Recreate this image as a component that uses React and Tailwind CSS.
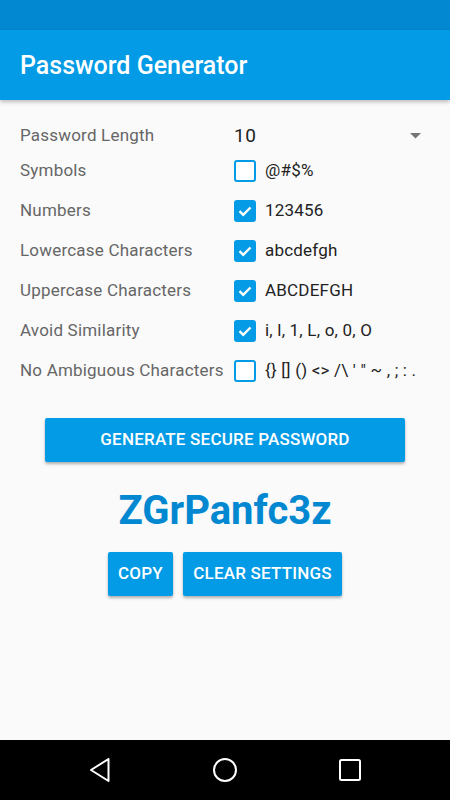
import React, { useState } from 'react';

const rows = [
  { label: 'Symbols', value: '@#$%', checked: false },
  { label: 'Numbers', value: '123456', checked: true },
  { label: 'Lowercase Characters', value: 'abcdefgh', checked: true },
  { label: 'Uppercase Characters', value: 'ABCDEFGH', checked: true },
  { label: 'Avoid Similarity', value: 'i, l, 1, L, o, 0, O', checked: true },
  { label: 'No Ambiguous Characters', value: '{} [] () <> /\\ \' " ~ , ; : .', checked: false },
];

const CheckBox = ({ checked }) =>
  checked ? (
    <div className="w-[22px] h-[22px] rounded-[3px] bg-[#039be5] flex items-center justify-center">
      <svg width="16" height="16" viewBox="0 0 16 16">
        <path d="M2.5 8.2 L6.2 11.8 L13.5 4.5" fill="none" stroke="white" strokeWidth="2.4" />
      </svg>
    </div>
  ) : (
    <div className="w-[22px] h-[22px] rounded-[3px] border-2 border-[#039be5] bg-white" />
  );

const App = () => {
  const [settings, setSettings] = useState(rows);

  const toggle = (i) => {
    setSettings(settings.map((r, j) => (j === i ? { ...r, checked: !r.checked } : r)));
  };

  return (
    <div className="w-[450px] h-[800px] flex flex-col bg-[#fafafa] font-['Roboto',sans-serif]">
      {/* status bar + toolbar */}
      <div className="h-[30px] bg-[#0288d1]" />
      <div className="h-[70px] bg-[#039be5] flex items-center px-5 shadow-[0_2px_4px_rgba(0,0,0,0.25)] z-10">
        <h1 className="text-white text-[25px] font-medium pt-[2px]">Password Generator</h1>
      </div>

      <div className="flex-1 flex flex-col">
        <div className="flex flex-col pt-[21px] px-5">
          <div className="flex items-center h-[30px]">
            <span className="w-[214px] text-[17px] tracking-[0.2px] text-[#666]">Password Length</span>
            <span className="flex-1 text-[19px] tracking-[0.5px] text-[#222]">10</span>
            <svg width="11" height="6" viewBox="0 0 11 6" className="mr-[9px]">
              <path d="M0 0 L11 0 L5.5 5.5 Z" fill="#757575" />
            </svg>
          </div>
          {settings.map((r, i) => (
            <div
              key={r.label}
              onClick={() => toggle(i)}
              className={`flex items-center h-[40px] ${i === 0 ? 'mt-[0px]' : ''}`}
            >
              <span className="w-[214px] text-[17px] tracking-[0.2px] text-[#666] whitespace-nowrap">{r.label}</span>
              <CheckBox checked={r.checked} />
              <span className="ml-[9px] text-[17px] tracking-[0.2px] text-[#222] whitespace-nowrap">{r.value}</span>
            </div>
          ))}
        </div>

        <div className="flex justify-center mt-[27px]">
          <button className="w-[360px] h-[44px] bg-[#039be5] text-white text-[17px] tracking-[0.2px] font-medium rounded-[2px] shadow-[0_2px_3px_rgba(0,0,0,0.3)]">
            GENERATE SECURE PASSWORD
          </button>
        </div>

        <div className="text-center text-[40px] font-bold text-[#0288d1] mt-[24px] leading-[50px]">
          ZGrPanfc3z
        </div>

        <div className="flex justify-center gap-[10px] mt-[16px]">
          <button className="w-[65px] h-[44px] bg-[#039be5] text-white text-[17px] tracking-[0.2px] font-medium rounded-[2px] shadow-[0_2px_3px_rgba(0,0,0,0.3)]">
            COPY
          </button>
          <button className="w-[159px] h-[44px] bg-[#039be5] text-white text-[17px] tracking-[0.2px] font-medium rounded-[2px] shadow-[0_2px_3px_rgba(0,0,0,0.3)]">
            CLEAR SETTINGS
          </button>
        </div>
      </div>

      {/* navigation bar */}
      <div className="h-[60px] bg-black flex items-center justify-between px-[88px]">
        <svg width="24" height="24" viewBox="0 0 24 24">
          <path d="M20.5 1 L20.5 23 L3 12 Z" fill="none" stroke="white" strokeWidth="2" strokeLinejoin="round" />
        </svg>
        <svg width="24" height="24" viewBox="0 0 24 24">
          <circle cx="12" cy="12" r="11" fill="none" stroke="white" strokeWidth="2" />
        </svg>
        <svg width="24" height="24" viewBox="0 0 24 24">
          <rect x="2" y="2" width="20" height="20" rx="1.5" fill="none" stroke="white" strokeWidth="2" />
        </svg>
      </div>
    </div>
  );
};

export default App;
